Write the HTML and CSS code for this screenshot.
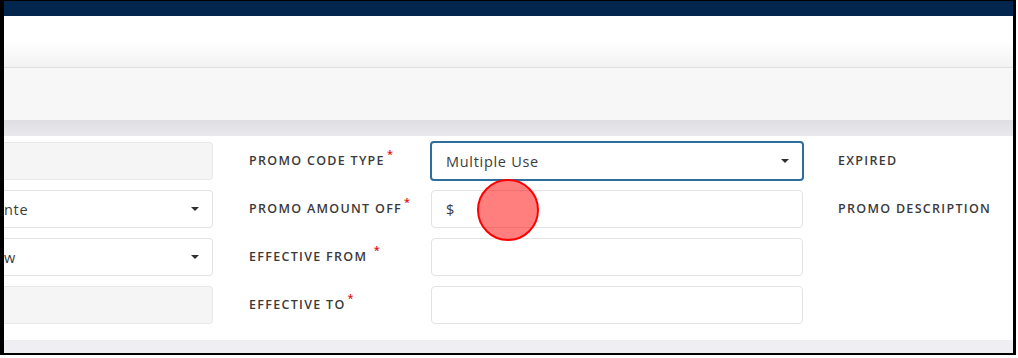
FILE: index.html
```html
<!DOCTYPE html>
<html lang="en">
<head>
    <meta charset="UTF-8">
    <title>Promo Code</title>
    <link rel="stylesheet" href="styles.css">
</head>
<body>
    <div class="frame">
        <div class="topbar"></div>
        <div class="header"></div>
        <div class="toolbar"></div>
        <div class="band"></div>

        <div class="panel">
            <div class="cut-box disabled"></div>
            <div class="label">PROMO CODE TYPE<span class="req">*</span></div>
            <div class="box select focus">Multiple Use<span class="caret"></span></div>
            <div class="label side">EXPIRED</div>

            <div class="cut-box select">nte<span class="caret"></span></div>
            <div class="label">PROMO AMOUNT OFF<span class="req">*</span></div>
            <div class="box">$</div>
            <div class="label side">PROMO DESCRIPTION</div>

            <div class="cut-box select">w<span class="caret"></span></div>
            <div class="label">EFFECTIVE FROM <span class="req">*</span></div>
            <div class="box"></div>
            <div class="label side"></div>

            <div class="cut-box disabled"></div>
            <div class="label">EFFECTIVE TO<span class="req">*</span></div>
            <div class="box"></div>
            <div class="label side"></div>
        </div>

        <div class="footer"></div>

        <div class="touch"></div>
    </div>
</body>
</html>
```

FILE: styles.css
```css
body {
    margin: 0;
    background-color: #fff;
    font-family: 'Open Sans', sans-serif;
    color: #333;
}

.frame {
    position: relative;
    width: 1016px;
    height: 355px;
    box-sizing: border-box;
    border-style: solid;
    border-color: #000;
    border-width: 1px 3px 2px 4px;
    display: flex;
    flex-direction: column;
    overflow: hidden;
}

.topbar {
    height: 15px;
    background-color: #03264f;
}

.header {
    height: 51px;
    background: linear-gradient(#fff 0%, #fff 50%, #f2f2f2 100%);
    border-bottom: 1px solid #dedede;
}

.toolbar {
    height: 52px;
    background-color: #f7f7f7;
}

.band {
    height: 16px;
    background: linear-gradient(#dfdfe3, #e9e9ed);
}

.panel {
    flex: 1;
    background-color: #fff;
    padding: 6px 0 16px 0;
    display: grid;
    grid-template-columns: 209px 218px 372px 1fr;
    grid-auto-rows: 38px;
    row-gap: 10px;
    align-items: center;
}

.footer {
    height: 13px;
    background-color: #efeff3;
}

.box, .cut-box {
    height: 38px;
    box-sizing: border-box;
    border: 1px solid #e3e3e3;
    border-radius: 4px;
    background-color: #fff;
    display: flex;
    align-items: center;
    padding-left: 14px;
    font-size: 14.5px;
    letter-spacing: 0.7px;
    color: #3c3c3c;
}

.cut-box {
    border-left: none;
    border-radius: 0 4px 4px 0;
    padding-left: 0;
    padding-right: 12px;
}

.cut-box.disabled {
    background-color: #f5f5f5;
    border-color: #e8e8e8;
}

.select {
    justify-content: space-between;
    padding-right: 13px;
}

.box.focus {
    height: 40px;
    margin: -1px;
    border: 2px solid #2c6f9c;
    padding-left: 14px;
    padding-right: 13px;
}

.caret {
    width: 0;
    height: 0;
    border-left: 4px solid transparent;
    border-right: 4px solid transparent;
    border-top: 4px solid #2f2f2f;
}

.label {
    padding-left: 36px;
    font-size: 12.5px;
    font-weight: 600;
    letter-spacing: 1.3px;
    line-height: 16px;
    color: #3a3a3a;
    white-space: nowrap;
}

.label.side {
    padding-left: 35px;
}

.req {
    color: #e01010;
    font-size: 11px;
    line-height: 0;
    vertical-align: 7px;
    margin-left: 2px;
}

.touch {
    position: absolute;
    left: 473px;
    top: 178px;
    width: 58px;
    height: 58px;
    border-radius: 50%;
    border: 2px solid #f00;
    background-color: rgba(255, 0, 0, 0.5);
}
```
